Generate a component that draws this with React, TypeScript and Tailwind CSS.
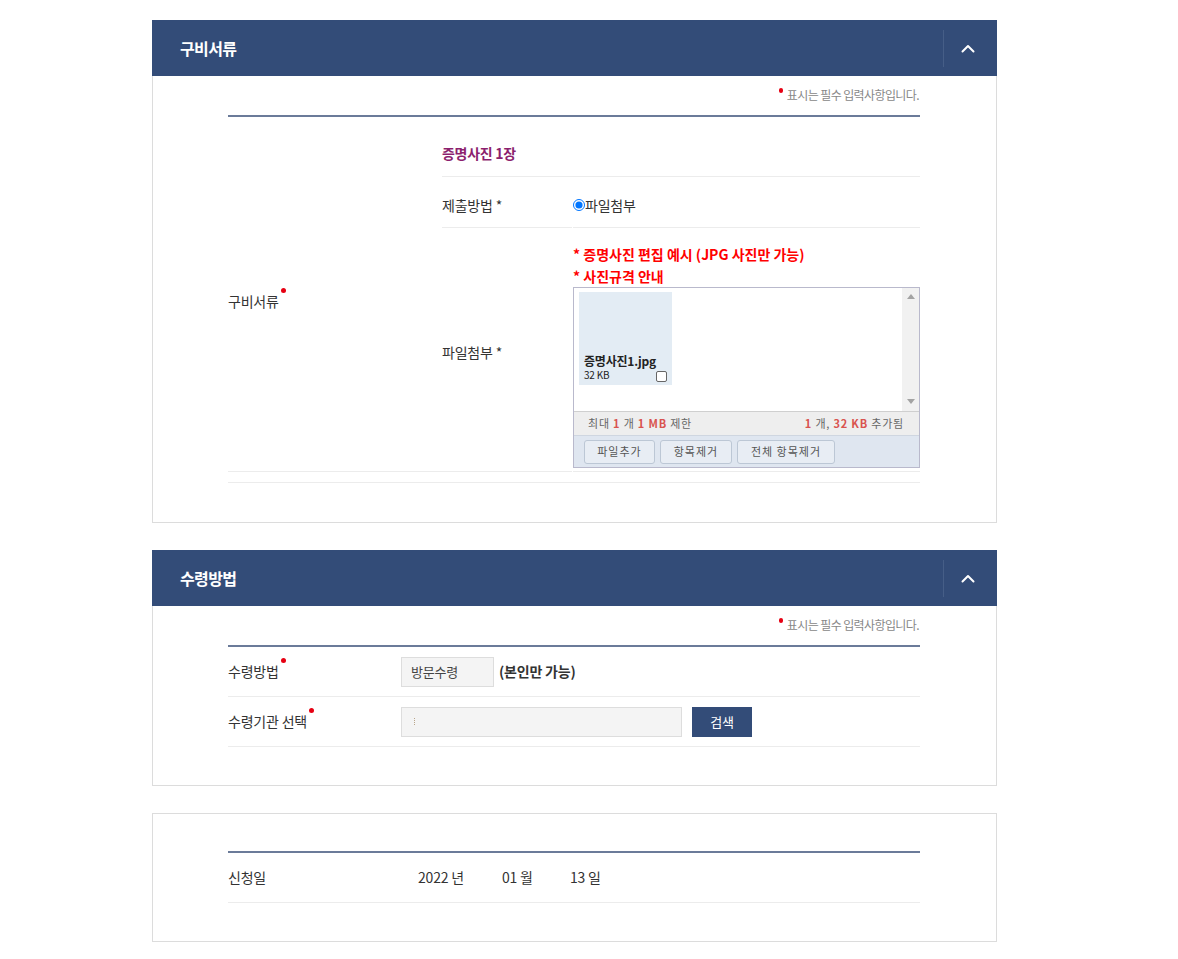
// 신청서 하단 — 구비서류 / 수령방법 / 신청일 패널
import type { ReactNode } from 'react';

const font = "font-['Noto_Sans_CJK_KR','Noto_Sans',sans-serif]";

function Chevron() {
  return (
    <svg width="14" height="9" viewBox="0 0 14 9" fill="none">
      <polyline points="1.5,7.5 7,2 12.5,7.5" stroke="white" strokeWidth="2" strokeLinecap="round" strokeLinejoin="round" />
    </svg>
  );
}

function Header({ title }: { title: string }) {
  return (
    <div className="h-[56px] bg-[#334c78] flex items-center">
      <h2 className="flex-1 pl-[28px] text-white text-[16px] font-bold tracking-[-0.6px]">{title}</h2>
      <div className="w-px h-[37px] bg-[#465e87]" />
      <div className="w-[53px] h-full flex items-center justify-center pr-[6px]">
        <Chevron />
      </div>
    </div>
  );
}

function RequiredNote() {
  return (
    <div className="flex justify-end items-start pt-[10px] h-[39px] pr-[77px]">
      <span className="w-[4px] h-[5px] rounded-full bg-[#e60012] mt-[2px] mr-[4px]" />
      <span className="text-[12px] text-[#888] tracking-[-0.6px] leading-[18px]">표시는 필수 입력사항입니다.</span>
    </div>
  );
}

function Req({ children }: { children: ReactNode }) {
  return (
    <span className="relative">
      {children}
      <span className="absolute -right-[7px] -top-[3px] w-[5px] h-[5px] rounded-full bg-[#e60012]" />
    </span>
  );
}

function Tri({ up }: { up?: boolean }) {
  return (
    <svg width="8" height="5" viewBox="0 0 8 5">
      <polygon points={up ? '0,5 4,0 8,5' : '0,0 8,0 4,5'} fill="#a3a3a3" />
    </svg>
  );
}

function FileBox() {
  return (
    <div className="w-[347px] h-[181px] border border-[#b9b9cc] flex flex-col">
      <div className="flex h-[123px] bg-white">
        <div className="flex-1 pl-[5px] pt-[4px]">
          <div className="relative w-[93px] h-[93px] bg-[#e3ecf4] flex flex-col justify-end px-[5px] pb-[3px]">
            <span className="text-[12px] font-bold text-[#222] leading-[15px]">증명사진1.jpg</span>
            <span className="text-[10px] text-[#222] leading-[14px]">32 KB</span>
            <span className="absolute right-[5px] bottom-[3px] w-[11px] h-[11px] border border-[#666] rounded-[2px] bg-white" />
          </div>
        </div>
        <div className="w-[17px] bg-[#f1f1f1] flex flex-col justify-between items-center pt-[6px] pb-[7px]">
          <Tri up />
          <Tri />
        </div>
      </div>
      <div className="h-[24px] bg-[#eeeeee] border-t border-[#cfcfcf] flex items-center justify-between pl-[14px] pr-[15px] text-[11px] text-[#666] tracking-[0.8px]">
        <span>
          최대 <b className="text-[#d9534f]">1</b> 개 <b className="text-[#d9534f]">1 MB</b> 제한
        </span>
        <span>
          <b className="text-[#d9534f]">1</b> 개, <b className="text-[#d9534f]">32 KB</b> 추가됨
        </span>
      </div>
      <div className="flex-1 bg-[#dfe6f0] border-t border-[#cfd6e0] flex items-center gap-[5px] pl-[10px]">
        {[
          ['파일추가', 'w-[71px]'],
          ['항목제거', 'w-[72px]'],
          ['전체 항목제거', 'w-[98px]'],
        ].map(([label, w]) => (
          <button key={label} className={`${w} h-[24px] border border-[#bcc7d5] rounded-[3px] bg-[#e8edf4] text-[11px] text-[#555] tracking-[1px]`}>
            {label}
          </button>
        ))}
      </div>
    </div>
  );
}

export default function App() {
  return (
    <div className={`${font} min-h-[959px] bg-white pl-[152px] pt-[20px] text-[#333]`}>
      {/* 구비서류 */}
      <section className="w-[845px]">
        <Header title="구비서류" />
        <div className="border-x border-b border-[#dcdcdc] pb-[39px]">
          <RequiredNote />
          <div className="ml-[75px] w-[692px]">
            <div className="border-t-2 border-[#6b7b99] flex">
              <div className="w-[214px] border-b border-[#ececec] flex items-center pt-[14px] text-[14px] tracking-[-0.2px]">
                <Req>구비서류</Req>
              </div>
              <div className="flex-1">
                <div className="h-[60px] border-b border-[#ececec] flex items-end pb-[12px] text-[14px] font-bold text-[#8c1f6e] tracking-[-0.3px]">
                  증명사진 1장
                </div>
                <div className="h-[51px] flex text-[14px] tracking-[-0.2px]">
                  <div className="w-[130px] border-b border-[#ececec] flex items-center pt-[6px]">제출방법 *</div>
                  <div className="flex-1 ml-[1px] border-b border-[#ececec] flex items-center pt-[6px]">
                    <input type="radio" defaultChecked className="w-[12px] h-[12px] m-0" />
                    <span>파일첨부</span>
                  </div>
                </div>
                <div className="flex text-[14px] tracking-[-0.2px]">
                  <div className="w-[130px] border-b border-[#ececec] flex items-center pt-[6px]">파일첨부 *</div>
                  <div className="flex-1 ml-[1px] border-b border-[#ececec] pt-[15px] pb-[3px]">
                    <p className="text-[#ff0000] font-bold leading-[22px] tracking-[0px]">* 증명사진 편집 예시 (JPG 사진만 가능)</p>
                    <p className="text-[#ff0000] font-bold leading-[22px] tracking-[0px]">* 사진규격 안내</p>
                    <FileBox />
                  </div>
                </div>
              </div>
            </div>
            <div className="mt-[10px] border-t border-[#ececec]" />
          </div>
        </div>
      </section>

      {/* 수령방법 */}
      <section className="w-[845px] mt-[27px]">
        <Header title="수령방법" />
        <div className="border-x border-b border-[#dcdcdc] pb-[38px]">
          <RequiredNote />
          <div className="ml-[75px] w-[692px] border-t-2 border-[#6b7b99] text-[14px] tracking-[-0.2px]">
            <div className="h-[50px] border-b border-[#ececec] flex items-center">
              <div className="w-[173px]">
                <Req>수령방법</Req>
              </div>
              <div className="w-[93px] h-[30px] border border-[#dddddd] bg-[#f4f4f4] flex items-center pl-[9px] text-[13px] text-[#444]">방문수령</div>
              <span className="ml-[5px] font-bold">(본인만 가능)</span>
            </div>
            <div className="h-[50px] border-b border-[#ececec] flex items-center">
              <div className="w-[173px]">
                <Req>수령기관 선택</Req>
              </div>
              <div className="w-[281px] h-[30px] border border-[#dddddd] bg-[#f4f4f4] flex items-center pl-[12px]">
                <span className="w-px h-[7px] border-l border-dotted border-[#b9a58a]" />
              </div>
              <button className="ml-[10px] w-[60px] h-[30px] bg-[#334c78] text-white text-[13px]">검색</button>
            </div>
          </div>
        </div>
      </section>

      {/* 신청일 */}
      <section className="w-[845px] mt-[27px] border border-[#dcdcdc] pt-[37px] pb-[38px]">
        <div className="ml-[75px] w-[692px] border-t-2 border-[#6b7b99] text-[14px] tracking-[-0.2px]">
          <div className="h-[50px] border-b border-[#ececec] flex items-center">
            <div className="w-[190px]">신청일</div>
            <div className="flex">
              <span className="w-[84px]">2022 년</span>
              <span className="w-[68px]">01 월</span>
              <span>13 일</span>
            </div>
          </div>
        </div>
      </section>
    </div>
  );
}
